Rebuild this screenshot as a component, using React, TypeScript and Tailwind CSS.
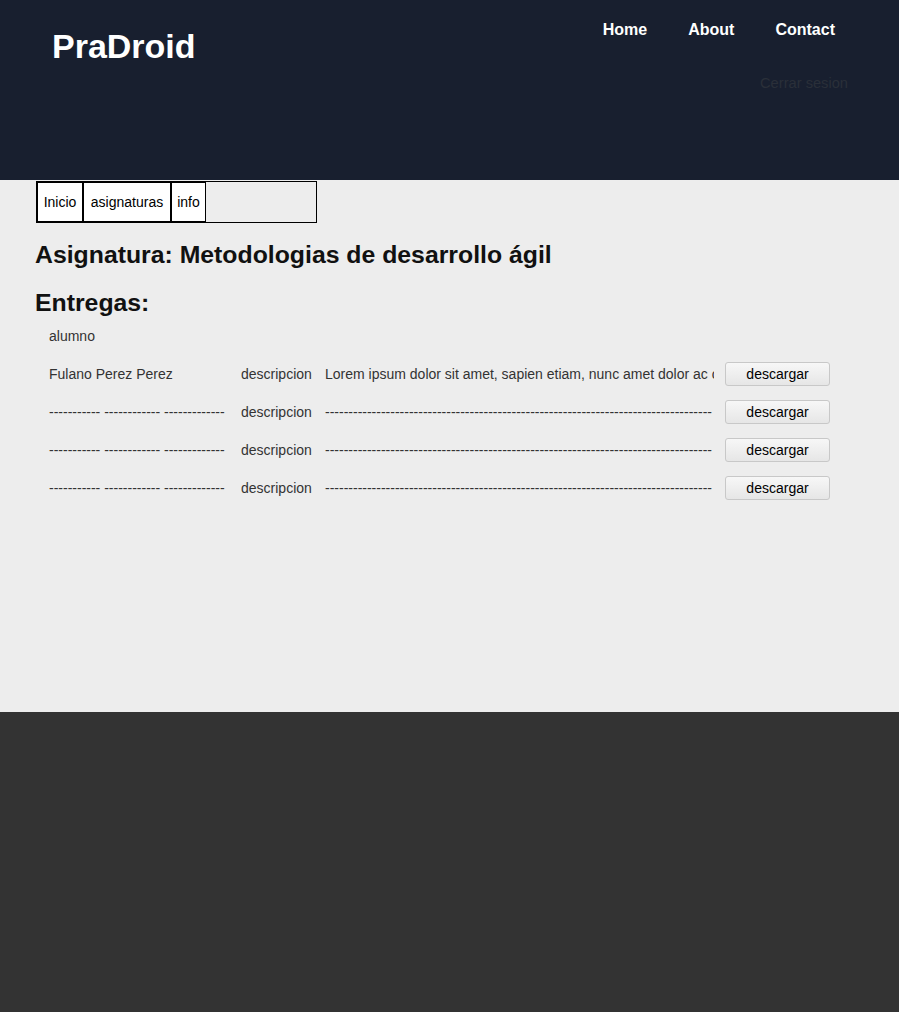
const rows = [
  {
    name: "Fulano Perez Perez",
    text: "Lorem ipsum dolor sit amet, sapien etiam, nunc amet dolor ac odio mauris justo.",
  },
  { name: "----------- ------------ -------------", text: "-".repeat(83) },
  { name: "----------- ------------ -------------", text: "-".repeat(83) },
  { name: "----------- ------------ -------------", text: "-".repeat(83) },
];

export default function App() {
  return (
    <div className="font-['Liberation_Sans',Arial,sans-serif]">
      {/* header */}
      <header className="flex h-[180px] justify-between bg-[#181f2f]">
        <h1 className="pl-[52px] pt-[26px] text-[34px] font-bold leading-[40px] text-white">PraDroid</h1>
        <div className="flex flex-col items-end">
          <ul className="flex gap-[41px] pr-[64px] pt-[20px] text-[16px] font-bold leading-[20px] text-white">
            <li>Home</li>
            <li>About</li>
            <li>Contact</li>
          </ul>
          <a className="mt-[35px] pr-[51px] text-[14.67px] leading-[17px] text-[#2a2f39]">Cerrar sesion</a>
        </div>
      </header>

      {/* content */}
      <main className="h-[532px] bg-[#ededed] pt-px text-[#333]">
        <div className="ml-[36px] flex h-[42px] w-[281px] border border-black text-[14px] text-black">
          <span className="flex w-[46px] items-center justify-center border border-black bg-white">Inicio</span>
          <span className="flex w-[88px] items-center justify-center border border-black bg-white">asignaturas</span>
          <span className="flex w-[35px] items-center justify-center border border-black bg-white">info</span>
        </div>

        <h2 className="ml-[35px] mt-[18px] text-[24.8px] font-bold leading-[28px] text-[#111]">
          Asignatura: Metodologias de desarrollo ágil
        </h2>
        <h2 className="ml-[35px] mt-[20px] text-[24.8px] font-bold leading-[28px] text-[#111]">Entregas:</h2>

        <p className="ml-[49px] mt-[11px] text-[14px] leading-[16px]">alumno</p>

        <div className="mt-[18px] flex flex-col gap-[14px] pl-[49px] text-[14px]">
          {rows.map((r, i) => (
            <div key={i} className="flex h-[24px] items-center">
              <span className="w-[192px] whitespace-nowrap">{r.name}</span>
              <span className="w-[84px]">descripcion</span>
              <span className="w-[389px] overflow-hidden whitespace-nowrap">{r.text}</span>
              <button className="ml-[11px] h-[24px] w-[105px] rounded-[3px] border border-[#c8c8c8] bg-gradient-to-b from-[#f7f7f7] to-[#e6e6e6] text-[14px] text-black">
                descargar
              </button>
            </div>
          ))}
        </div>
      </main>

      {/* footer */}
      <footer className="h-[300px] bg-[#333333]" />
    </div>
  );
}
